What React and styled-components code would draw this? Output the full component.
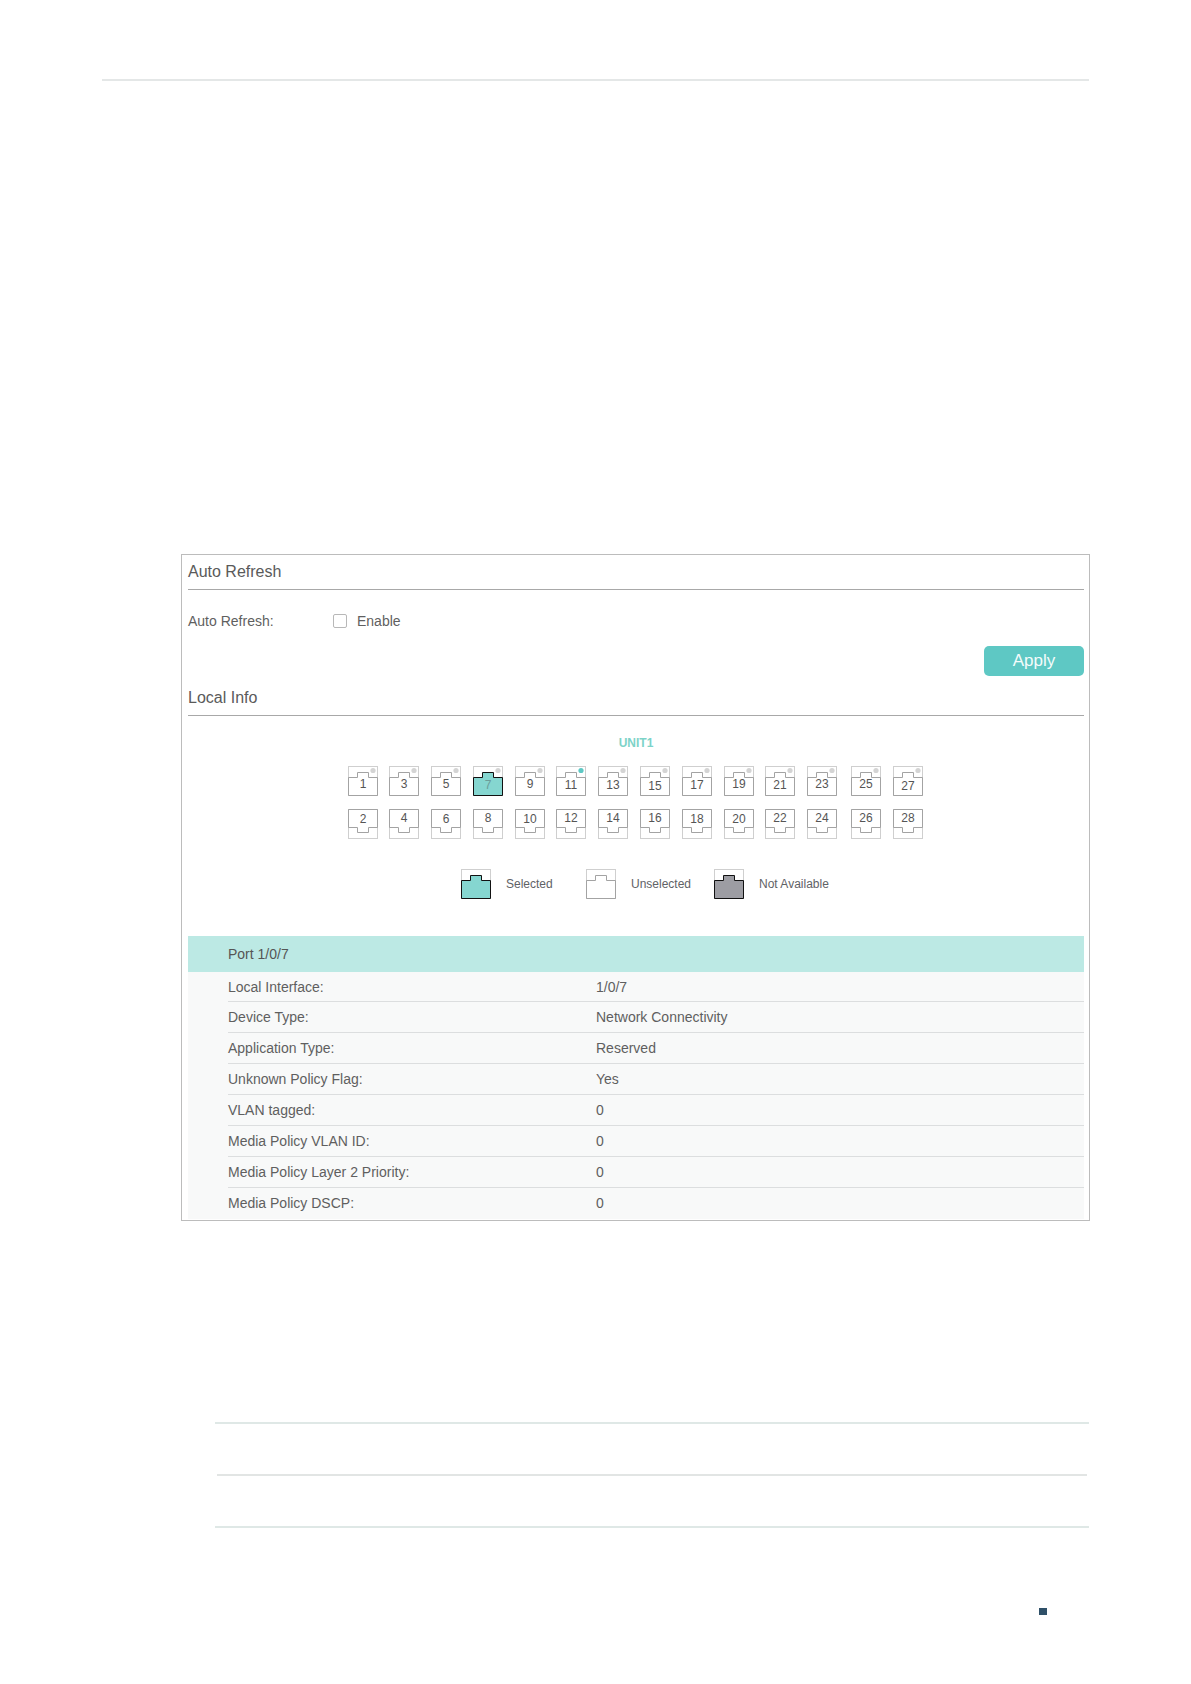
import styled, { createGlobalStyle } from 'styled-components';

const GlobalStyle = createGlobalStyle`
  html, body {
    margin: 0;
    padding: 0;
    background: #fff;
  }
  body {
    font-family: "Liberation Sans", Arial, sans-serif;
    color: #555;
  }
`;

// [number, vertical nudge of the digit]
const TOP_PORTS = [
  [1, 0], [3, 0], [5, 0], [7, 1], [9, 0], [11, 1], [13, 1], [15, 2], [17, 1], [19, 0], [21, 1], [23, 0], [25, 0], [27, 2],
];
const BOTTOM_PORTS = [
  [2, 1], [4, 0], [6, 1], [8, 0], [10, 1], [12, 0], [14, 0], [16, 0], [18, 1], [20, 1], [22, 0], [24, 0], [26, 0], [28, 0],
];

const INFO_ROWS = [
  ['Local Interface:', '1/0/7'],
  ['Device Type:', 'Network Connectivity'],
  ['Application Type:', 'Reserved'],
  ['Unknown Policy Flag:', 'Yes'],
  ['VLAN tagged:', '0'],
  ['Media Policy VLAN ID:', '0'],
  ['Media Policy Layer 2 Priority:', '0'],
  ['Media Policy DSCP:', '0'],
];

const PortIcon = ({ flip, fill = 'none', stroke = '#a3a3a3', dot }) => (
  <IconSvg viewBox="0 0 30 30" $flip={flip}>
    <rect x="0.5" y="0.5" width="29" height="29" fill="#fff" stroke="#cfcfcf" />
    <path d="M0.5 29.5V11.5H9.5V6.5H20.5V11.5H29.5V29.5Z" fill={fill} stroke={stroke} />
    {dot && <circle cx="25" cy="4.5" r="2.6" fill={dot} />}
  </IconSvg>
);

const Port = ({ n, dy, flip }) => {
  const selected = n === 7;
  const dot = n === 11 ? '#5ec8c4' : '#d4d4d4';
  return (
    <PortCell>
      <PortIcon
        flip={flip}
        dot={flip ? null : dot}
        fill={selected ? '#85d6d0' : 'none'}
        stroke={selected ? '#111' : '#a3a3a3'}
      />
      {flip && <BottomDot />}
      <PortNumber $flip={flip} $selected={selected} $dy={dy}>{n}</PortNumber>
    </PortCell>
  );
};

export default function App() {
  return (
    <Page>
      <GlobalStyle />
      <TopRule />
      <Panel>
        <SectionTitle>Auto Refresh</SectionTitle>
        <FormRow>
          <FormLabel>Auto Refresh:</FormLabel>
          <CheckBox />
          <span>Enable</span>
        </FormRow>
        <ButtonRow>
          <ApplyButton>Apply</ApplyButton>
        </ButtonRow>
        <SectionTitle $short>Local Info</SectionTitle>
        <UnitLabel>UNIT1</UnitLabel>
        <PortGrid>
          {TOP_PORTS.map(([n, dy]) => <Port key={n} n={n} dy={dy} />)}
          {BOTTOM_PORTS.map(([n, dy]) => <Port key={n} n={n} dy={dy} flip />)}
        </PortGrid>
        <Legend>
          <LegendItem $width={125}>
            <PortIcon fill="#85d6d0" stroke="#111" />
            <span>Selected</span>
          </LegendItem>
          <LegendItem $width={128}>
            <PortIcon />
            <span>Unselected</span>
          </LegendItem>
          <LegendItem>
            <PortIcon fill="#9d9da3" stroke="#111" />
            <span>Not Available</span>
          </LegendItem>
        </Legend>
        <InfoHeader>Port 1/0/7</InfoHeader>
        <InfoTable>
          {INFO_ROWS.map(([label, value]) => (
            <InfoRow key={label}>
              <span>{label}</span>
              <span>{value}</span>
            </InfoRow>
          ))}
        </InfoTable>
      </Panel>
      <NoteRules>
        <NoteRule />
        <NoteRule $inset />
        <NoteRule />
      </NoteRules>
      <PageMark />
    </Page>
  );
}

const Page = styled.div`
  width: 1191px;
  height: 1684px;
  padding-top: 79px;
  box-sizing: border-box;
  overflow: hidden;
`;

const TopRule = styled.div`
  height: 2px;
  margin: 0 102px;
  background: #e4e7e7;
`;

const Panel = styled.section`
  box-sizing: border-box;
  width: 909px;
  height: 667px;
  margin: 473px 0 0 181px;
  padding: 0 5px 0 6px;
  border: 1px solid #bcbcbc;
`;

const SectionTitle = styled.h2`
  box-sizing: border-box;
  height: ${p => (p.$short ? '40px' : '35px')};
  margin: 0;
  padding-top: ${p => (p.$short ? '12px' : '7px')};
  border-bottom: 1px solid #a8a8a8;
  font-size: 16px;
  font-weight: 400;
  line-height: 20px;
  color: #5a5a5a;
`;

const FormRow = styled.div`
  display: flex;
  align-items: center;
  height: 20px;
  margin-top: 21px;
  font-size: 14px;
  line-height: 20px;
  color: #5f5f5f;
`;

const FormLabel = styled.span`
  width: 145px;
`;

const CheckBox = styled.span`
  box-sizing: border-box;
  width: 14px;
  height: 14px;
  margin-right: 10px;
  border: 1px solid #b8b8b8;
  border-radius: 2px;
`;

const ButtonRow = styled.div`
  display: flex;
  justify-content: flex-end;
  margin-top: 15px;
`;

const ApplyButton = styled.button`
  width: 100px;
  height: 30px;
  padding: 0;
  border: 0;
  border-radius: 5px;
  background: #5ec8c4;
  color: #f4fcfb;
  font-family: inherit;
  font-size: 17px;
`;

const UnitLabel = styled.div`
  margin-top: 20px;
  text-align: center;
  font-size: 12px;
  font-weight: 700;
  line-height: 14px;
  color: #7dd3c8;
`;

const PortGrid = styled.div`
  display: grid;
  grid-template-columns: 41px 42px 42px 42px 41px 42px 42px 42px 42px 41px 42px 44px 42px 30px;
  grid-auto-rows: 29px;
  row-gap: 14px;
  margin: 16px 0 0 160px;
`;

const PortCell = styled.div`
  display: grid;
  width: 29px;
  height: 29px;

  & > * {
    grid-area: 1 / 1;
  }
`;

const IconSvg = styled.svg`
  display: block;
  width: 30px;
  height: 30px;
  transform: ${p => (p.$flip ? 'scaleY(-1)' : 'none')};
`;

const BottomDot = styled.i`
  justify-self: end;
  align-self: end;
  width: 5px;
  height: 5px;
  margin: 0 1px 1px 0;
  border-radius: 50%;
  background: #d4d4d4;
`;

const PortNumber = styled.span`
  padding-top: ${p => (p.$flip ? '1px' : '10px')};
  transform: translateY(${p => p.$dy}px);
  text-align: center;
  font-size: 12px;
  line-height: 16px;
  color: ${p => (p.$selected ? '#6b9d9a' : '#555')};
`;

const Legend = styled.div`
  display: flex;
  margin: 31px 0 0 273px;
  height: 30px;
`;

const LegendItem = styled.div`
  display: flex;
  align-items: center;
  gap: 15px;
  width: ${p => (p.$width ? `${p.$width}px` : 'auto')};
  font-size: 12px;
  color: #5f6266;
`;

const InfoHeader = styled.div`
  height: 36px;
  margin-top: 37px;
  padding-left: 40px;
  background: #bce9e4;
  font-size: 14px;
  line-height: 36px;
  color: #555;
`;

const InfoTable = styled.div`
  padding-left: 40px;
  background: #f8f9f9;
`;

const InfoRow = styled.div`
  display: grid;
  grid-template-columns: 368px 1fr;
  align-items: center;
  box-sizing: border-box;
  height: 31px;
  border-bottom: 1px solid #dcdedf;
  font-size: 14px;
  color: #5f5f5f;

  &:first-child {
    height: 30px;
  }

  &:last-child {
    height: 31px;
    padding-bottom: 2px;
    border-bottom: 0;
  }
`;

const NoteRules = styled.div`
  display: flex;
  flex-direction: column;
  gap: 50px;
  margin: 201px 102px 0 215px;
`;

const NoteRule = styled.div`
  height: 2px;
  margin: 0 ${p => (p.$inset ? '2px' : '0')};
  background: ${p => (p.$inset ? '#e2e5e4' : '#dfe8e6')};
`;

const PageMark = styled.div`
  width: 8px;
  height: 7px;
  margin: 80px 0 0 1039px;
  background: #2f5068;
`;
